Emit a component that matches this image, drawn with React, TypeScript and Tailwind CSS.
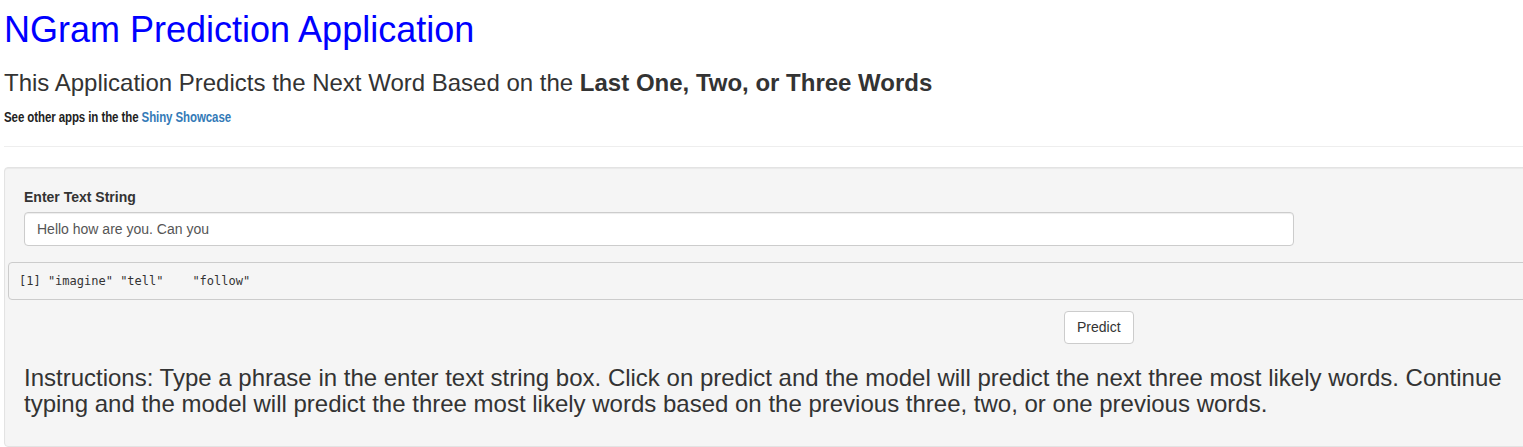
export default function App() {
  const words = ['"imagine"', '"tell"   ', '"follow"']

  return (
    <div className="h-[447px] w-[1523px] overflow-hidden bg-white font-['Liberation_Sans',Arial,sans-serif] text-[#333]">
      <div className="px-[4px] pt-[10px]">
        <h1 className="text-[36px] leading-[1.1] text-[#0000ff]">NGram Prediction Application</h1>
        <h3 className="mt-[20px] text-[24px] leading-[1.1]">
          This Application Predicts the Next Word Based on the <b>Last One, Two, or Three Words</b>
        </h3>
        <div className="mt-[9px] h-[20px]">
          <span className="inline-block origin-left scale-x-[0.82] text-[14px] leading-[20px] font-bold tracking-[-0.1px] whitespace-nowrap text-[#222]">
            See other apps in the the <a className="text-[#337ab7]">Shiny Showcase</a>
          </span>
        </div>
        <hr className="mt-[21px] mb-[20px] w-[1600px] border-t border-[#eee]" />

        <div className="w-[1560px] rounded-[4px] border border-[#e3e3e3] bg-[#f5f5f5] p-[19px] shadow-[inset_0_1px_1px_rgba(0,0,0,0.05)]">
          <label className="mb-[5px] block text-[14px] leading-[20px] font-bold">Enter Text String</label>
          <div className="h-[34px] w-[1270px] rounded-[4px] border border-[#ccc] bg-white px-[12px] py-[6px] text-[14px] leading-[20px] text-[#555] shadow-[inset_0_1px_1px_rgba(0,0,0,0.075)]">
            Hello how are you. Can you
          </div>
          <pre className="mt-[16px] mb-[11px] ml-[-16px] h-[38px] w-[1600px] rounded-[4px] border border-[#ccc] bg-[#f5f5f5] px-[10px] py-[8px] font-['DejaVu_Sans_Mono','Liberation_Mono',monospace] text-[12px] leading-[20px] whitespace-pre text-[#333]">
            {'[1] ' + words.join(' ')}
          </pre>
          <div className="flex pl-[1040px]">
            <button className="h-[33px] rounded-[4px] border border-[#ccc] bg-white px-[12px] text-[14px] leading-[20px] text-[#333]">
              Predict
            </button>
          </div>
          <h3 className="mt-[21px] mb-[9px] w-[1500px] text-[24px] leading-[1.1]">
            Instructions: Type a phrase in the enter text string box. Click on predict and the model will predict the next three most likely words. Continue typing and the model will predict the three most likely words based on the previous three, two, or one previous words.
          </h3>
        </div>
      </div>
    </div>
  )
}
